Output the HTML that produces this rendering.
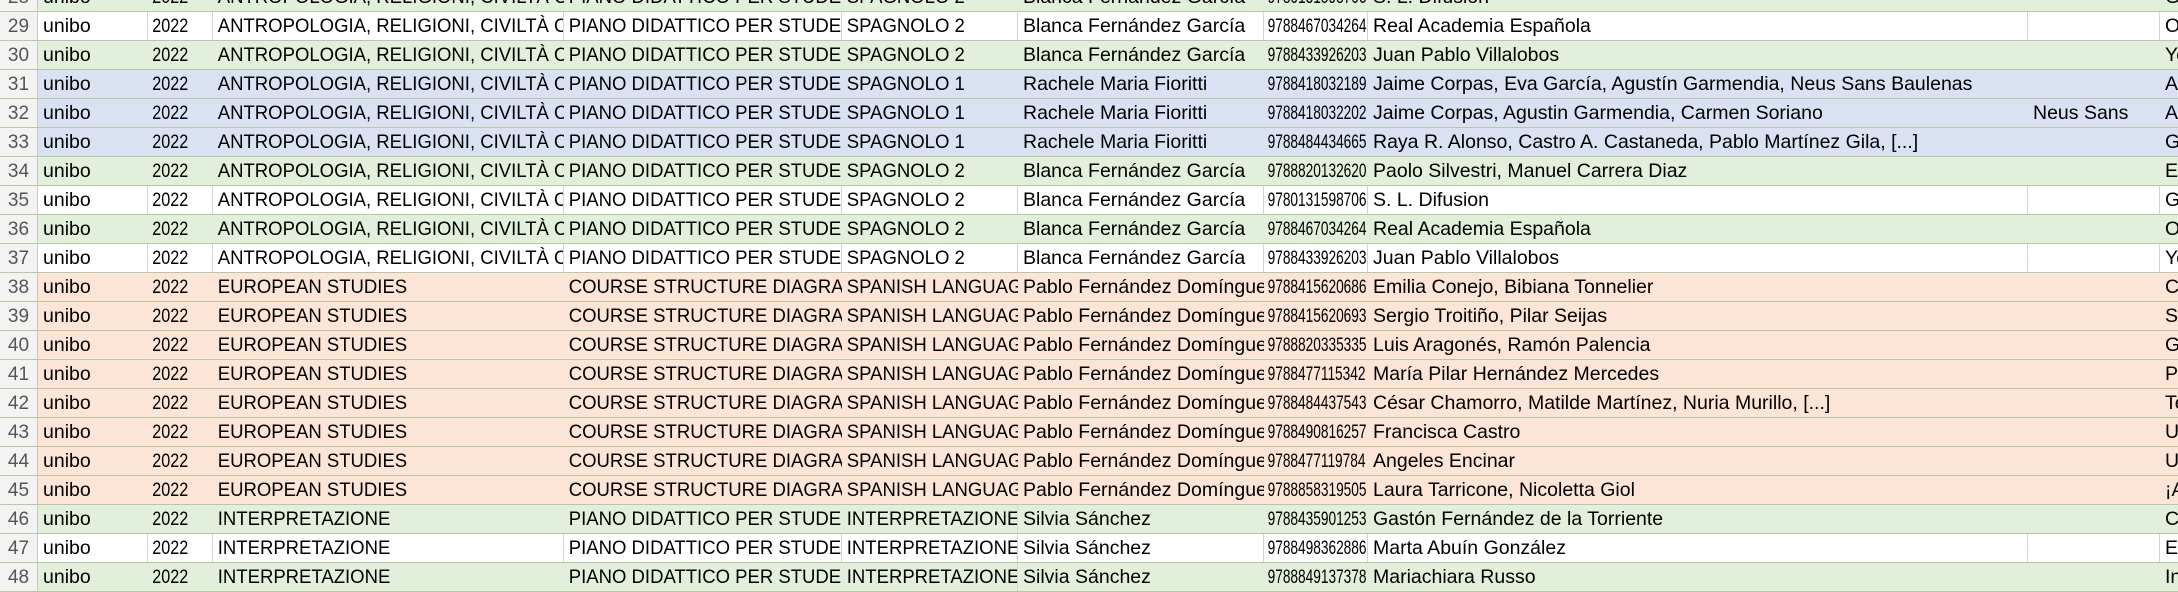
<!DOCTYPE html>
<html><head><meta charset="utf-8"><style>
html,body{margin:0;padding:0;width:2178px;height:580px;overflow:hidden;background:#fff;font-family:"Liberation Sans",Arial,sans-serif;}
.r{position:absolute;left:0;width:2178px;height:29px;box-sizing:border-box;border-bottom:1px solid #b5c9a3;}
.r>div{position:absolute;top:0;height:28px;overflow:hidden;white-space:nowrap;box-sizing:border-box;}
.r>div span{display:inline-block;font-size:19.5px;line-height:29px;padding-left:5px;color:#000;}
.r>div.bb span{font-size:19px;transform:scaleX(.85);transform-origin:0 0}
.r>div.gg span{font-size:19px;transform:scaleX(.72);transform-origin:0 0;padding-left:5px}
.r>div.c span,.r>div.d span,.r>div.e span{transform:scaleX(.95);transform-origin:0 0}
.r>div.h{left:0;width:38px;background:#f3f3f3;border-right:1px solid #c8c8c8;text-align:center;}
.r>div.h span{color:#555;padding-left:0;font-size:19px}
.g{background:#e2efda}.w{background:#fff}.b{background:#d9e1f2}.p{background:#fce4d6}
.w>div:not(.h){border-right:1px solid #d4d4d4}
.a{left:38px;width:110px}.bb{left:148px;width:65px}.c{left:213px;width:351px}.d{left:564px;width:278px}.e{left:842px;width:176px}.f{left:1018px;width:246px}.gg{left:1264px;width:104px}.hh{left:1368px;width:660px}.i{left:2028px;width:132px}.j{left:2160px;width:60px}
.t .e{border-right:1px solid #cfdcc4}
</style></head><body>

<div class="r g" style="top:-17px"><div class="h"><span>28</span></div><div class="a"><span>unibo</span></div><div class="bb"><span>2022</span></div><div class="c"><span>ANTROPOLOGIA, RELIGIONI, CIVILTÀ ORIENTALI</span></div><div class="d"><span>PIANO DIDATTICO PER STUDENTI</span></div><div class="e"><span>SPAGNOLO 2</span></div><div class="f"><span>Blanca Fernández García</span></div><div class="gg"><span>9780131598706</span></div><div class="hh"><span>S. L. Difusion</span></div><div class="i"></div><div class="j"><span>G</span></div></div>

<div class="r w" style="top:12px"><div class="h"><span>29</span></div><div class="a"><span>unibo</span></div><div class="bb"><span>2022</span></div><div class="c"><span>ANTROPOLOGIA, RELIGIONI, CIVILTÀ ORIENTALI</span></div><div class="d"><span>PIANO DIDATTICO PER STUDENTI</span></div><div class="e"><span>SPAGNOLO 2</span></div><div class="f"><span>Blanca Fernández García</span></div><div class="gg"><span>9788467034264</span></div><div class="hh"><span>Real Academia Española</span></div><div class="i"></div><div class="j"><span>O</span></div></div>

<div class="r g" style="top:41px"><div class="h"><span>30</span></div><div class="a"><span>unibo</span></div><div class="bb"><span>2022</span></div><div class="c"><span>ANTROPOLOGIA, RELIGIONI, CIVILTÀ ORIENTALI</span></div><div class="d"><span>PIANO DIDATTICO PER STUDENTI</span></div><div class="e"><span>SPAGNOLO 2</span></div><div class="f"><span>Blanca Fernández García</span></div><div class="gg"><span>9788433926203</span></div><div class="hh"><span>Juan Pablo Villalobos</span></div><div class="i"></div><div class="j"><span>Yo</span></div></div>

<div class="r b" style="top:70px"><div class="h"><span>31</span></div><div class="a"><span>unibo</span></div><div class="bb"><span>2022</span></div><div class="c"><span>ANTROPOLOGIA, RELIGIONI, CIVILTÀ ORIENTALI</span></div><div class="d"><span>PIANO DIDATTICO PER STUDENTI</span></div><div class="e"><span>SPAGNOLO 1</span></div><div class="f"><span>Rachele Maria Fioritti</span></div><div class="gg"><span>9788418032189</span></div><div class="hh"><span>Jaime Corpas, Eva García, Agustín Garmendia, Neus Sans Baulenas</span></div><div class="i"></div><div class="j"><span>A</span></div></div>

<div class="r b" style="top:99px"><div class="h"><span>32</span></div><div class="a"><span>unibo</span></div><div class="bb"><span>2022</span></div><div class="c"><span>ANTROPOLOGIA, RELIGIONI, CIVILTÀ ORIENTALI</span></div><div class="d"><span>PIANO DIDATTICO PER STUDENTI</span></div><div class="e"><span>SPAGNOLO 1</span></div><div class="f"><span>Rachele Maria Fioritti</span></div><div class="gg"><span>9788418032202</span></div><div class="hh"><span>Jaime Corpas, Agustin Garmendia, Carmen Soriano</span></div><div class="i"><span>Neus Sans</span></div><div class="j"><span>A</span></div></div>

<div class="r b" style="top:128px"><div class="h"><span>33</span></div><div class="a"><span>unibo</span></div><div class="bb"><span>2022</span></div><div class="c"><span>ANTROPOLOGIA, RELIGIONI, CIVILTÀ ORIENTALI</span></div><div class="d"><span>PIANO DIDATTICO PER STUDENTI</span></div><div class="e"><span>SPAGNOLO 1</span></div><div class="f"><span>Rachele Maria Fioritti</span></div><div class="gg"><span>9788484434665</span></div><div class="hh"><span>Raya R. Alonso, Castro A. Castaneda, Pablo Martínez Gila, [...]</span></div><div class="i"></div><div class="j"><span>G</span></div></div>

<div class="r g" style="top:157px"><div class="h"><span>34</span></div><div class="a"><span>unibo</span></div><div class="bb"><span>2022</span></div><div class="c"><span>ANTROPOLOGIA, RELIGIONI, CIVILTÀ ORIENTALI</span></div><div class="d"><span>PIANO DIDATTICO PER STUDENTI</span></div><div class="e"><span>SPAGNOLO 2</span></div><div class="f"><span>Blanca Fernández García</span></div><div class="gg"><span>9788820132620</span></div><div class="hh"><span>Paolo Silvestri, Manuel Carrera Diaz</span></div><div class="i"></div><div class="j"><span>En</span></div></div>

<div class="r w" style="top:186px"><div class="h"><span>35</span></div><div class="a"><span>unibo</span></div><div class="bb"><span>2022</span></div><div class="c"><span>ANTROPOLOGIA, RELIGIONI, CIVILTÀ ORIENTALI</span></div><div class="d"><span>PIANO DIDATTICO PER STUDENTI</span></div><div class="e"><span>SPAGNOLO 2</span></div><div class="f"><span>Blanca Fernández García</span></div><div class="gg"><span>9780131598706</span></div><div class="hh"><span>S. L. Difusion</span></div><div class="i"></div><div class="j"><span>G</span></div></div>

<div class="r g" style="top:215px"><div class="h"><span>36</span></div><div class="a"><span>unibo</span></div><div class="bb"><span>2022</span></div><div class="c"><span>ANTROPOLOGIA, RELIGIONI, CIVILTÀ ORIENTALI</span></div><div class="d"><span>PIANO DIDATTICO PER STUDENTI</span></div><div class="e"><span>SPAGNOLO 2</span></div><div class="f"><span>Blanca Fernández García</span></div><div class="gg"><span>9788467034264</span></div><div class="hh"><span>Real Academia Española</span></div><div class="i"></div><div class="j"><span>O</span></div></div>

<div class="r w" style="top:244px"><div class="h"><span>37</span></div><div class="a"><span>unibo</span></div><div class="bb"><span>2022</span></div><div class="c"><span>ANTROPOLOGIA, RELIGIONI, CIVILTÀ ORIENTALI</span></div><div class="d"><span>PIANO DIDATTICO PER STUDENTI</span></div><div class="e"><span>SPAGNOLO 2</span></div><div class="f"><span>Blanca Fernández García</span></div><div class="gg"><span>9788433926203</span></div><div class="hh"><span>Juan Pablo Villalobos</span></div><div class="i"></div><div class="j"><span>Yo</span></div></div>

<div class="r p" style="top:273px"><div class="h"><span>38</span></div><div class="a"><span>unibo</span></div><div class="bb"><span>2022</span></div><div class="c"><span>EUROPEAN STUDIES</span></div><div class="d"><span>COURSE STRUCTURE DIAGRAM</span></div><div class="e"><span>SPANISH LANGUAGE</span></div><div class="f"><span>Pablo Fernández Domínguez</span></div><div class="gg"><span>9788415620686</span></div><div class="hh"><span>Emilia Conejo, Bibiana Tonnelier</span></div><div class="i"></div><div class="j"><span>C</span></div></div>

<div class="r p" style="top:302px"><div class="h"><span>39</span></div><div class="a"><span>unibo</span></div><div class="bb"><span>2022</span></div><div class="c"><span>EUROPEAN STUDIES</span></div><div class="d"><span>COURSE STRUCTURE DIAGRAM</span></div><div class="e"><span>SPANISH LANGUAGE</span></div><div class="f"><span>Pablo Fernández Domínguez</span></div><div class="gg"><span>9788415620693</span></div><div class="hh"><span>Sergio Troitiño, Pilar Seijas</span></div><div class="i"></div><div class="j"><span>S</span></div></div>

<div class="r p" style="top:331px"><div class="h"><span>40</span></div><div class="a"><span>unibo</span></div><div class="bb"><span>2022</span></div><div class="c"><span>EUROPEAN STUDIES</span></div><div class="d"><span>COURSE STRUCTURE DIAGRAM</span></div><div class="e"><span>SPANISH LANGUAGE</span></div><div class="f"><span>Pablo Fernández Domínguez</span></div><div class="gg"><span>9788820335335</span></div><div class="hh"><span>Luis Aragonés, Ramón Palencia</span></div><div class="i"></div><div class="j"><span>G</span></div></div>

<div class="r p" style="top:360px"><div class="h"><span>41</span></div><div class="a"><span>unibo</span></div><div class="bb"><span>2022</span></div><div class="c"><span>EUROPEAN STUDIES</span></div><div class="d"><span>COURSE STRUCTURE DIAGRAM</span></div><div class="e"><span>SPANISH LANGUAGE</span></div><div class="f"><span>Pablo Fernández Domínguez</span></div><div class="gg"><span>9788477115342</span></div><div class="hh"><span>María Pilar Hernández Mercedes</span></div><div class="i"></div><div class="j"><span>Pa</span></div></div>

<div class="r p" style="top:389px"><div class="h"><span>42</span></div><div class="a"><span>unibo</span></div><div class="bb"><span>2022</span></div><div class="c"><span>EUROPEAN STUDIES</span></div><div class="d"><span>COURSE STRUCTURE DIAGRAM</span></div><div class="e"><span>SPANISH LANGUAGE</span></div><div class="f"><span>Pablo Fernández Domínguez</span></div><div class="gg"><span>9788484437543</span></div><div class="hh"><span>César Chamorro, Matilde Martínez, Nuria Murillo, [...]</span></div><div class="i"></div><div class="j"><span>Te</span></div></div>

<div class="r p" style="top:418px"><div class="h"><span>43</span></div><div class="a"><span>unibo</span></div><div class="bb"><span>2022</span></div><div class="c"><span>EUROPEAN STUDIES</span></div><div class="d"><span>COURSE STRUCTURE DIAGRAM</span></div><div class="e"><span>SPANISH LANGUAGE</span></div><div class="f"><span>Pablo Fernández Domínguez</span></div><div class="gg"><span>9788490816257</span></div><div class="hh"><span>Francisca Castro</span></div><div class="i"></div><div class="j"><span>U</span></div></div>

<div class="r p" style="top:447px"><div class="h"><span>44</span></div><div class="a"><span>unibo</span></div><div class="bb"><span>2022</span></div><div class="c"><span>EUROPEAN STUDIES</span></div><div class="d"><span>COURSE STRUCTURE DIAGRAM</span></div><div class="e"><span>SPANISH LANGUAGE</span></div><div class="f"><span>Pablo Fernández Domínguez</span></div><div class="gg"><span>9788477119784</span></div><div class="hh"><span>Angeles Encinar</span></div><div class="i"></div><div class="j"><span>U</span></div></div>

<div class="r p" style="top:476px"><div class="h"><span>45</span></div><div class="a"><span>unibo</span></div><div class="bb"><span>2022</span></div><div class="c"><span>EUROPEAN STUDIES</span></div><div class="d"><span>COURSE STRUCTURE DIAGRAM</span></div><div class="e"><span>SPANISH LANGUAGE</span></div><div class="f"><span>Pablo Fernández Domínguez</span></div><div class="gg"><span>9788858319505</span></div><div class="hh"><span>Laura Tarricone, Nicoletta Giol</span></div><div class="i"></div><div class="j"><span>¡A</span></div></div>

<div class="r g t" style="top:505px"><div class="h"><span>46</span></div><div class="a"><span>unibo</span></div><div class="bb"><span>2022</span></div><div class="c"><span>INTERPRETAZIONE</span></div><div class="d"><span>PIANO DIDATTICO PER STUDENTI</span></div><div class="e"><span>INTERPRETAZIONE</span></div><div class="f"><span>Silvia Sánchez</span></div><div class="gg"><span>9788435901253</span></div><div class="hh"><span>Gastón Fernández de la Torriente</span></div><div class="i"></div><div class="j"><span>Co</span></div></div>

<div class="r w" style="top:534px"><div class="h"><span>47</span></div><div class="a"><span>unibo</span></div><div class="bb"><span>2022</span></div><div class="c"><span>INTERPRETAZIONE</span></div><div class="d"><span>PIANO DIDATTICO PER STUDENTI</span></div><div class="e"><span>INTERPRETAZIONE</span></div><div class="f"><span>Silvia Sánchez</span></div><div class="gg"><span>9788498362886</span></div><div class="hh"><span>Marta Abuín González</span></div><div class="i"></div><div class="j"><span>El</span></div></div>

<div class="r g t" style="top:563px"><div class="h"><span>48</span></div><div class="a"><span>unibo</span></div><div class="bb"><span>2022</span></div><div class="c"><span>INTERPRETAZIONE</span></div><div class="d"><span>PIANO DIDATTICO PER STUDENTI</span></div><div class="e"><span>INTERPRETAZIONE</span></div><div class="f"><span>Silvia Sánchez</span></div><div class="gg"><span>9788849137378</span></div><div class="hh"><span>Mariachiara Russo</span></div><div class="i"></div><div class="j"><span>In</span></div></div>

</body></html>
